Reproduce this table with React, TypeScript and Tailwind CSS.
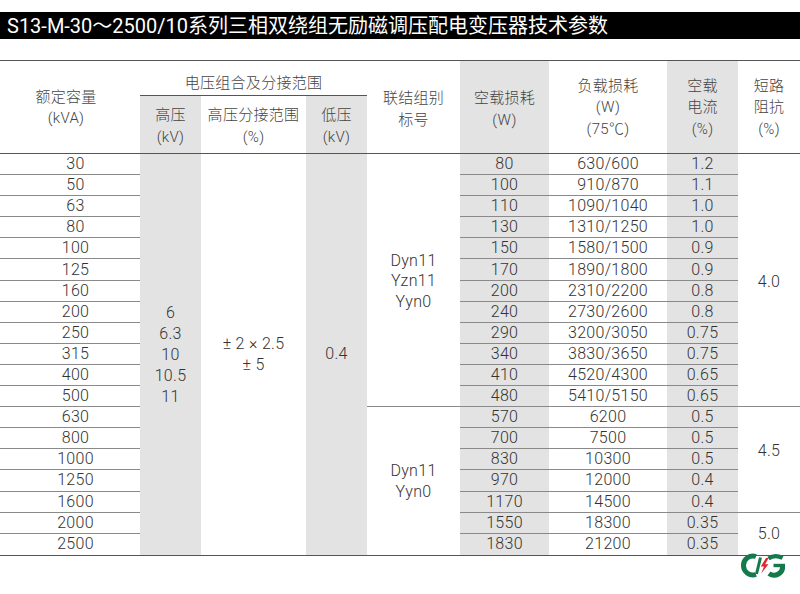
import React from 'react';

const rows: [string, string, string, string][] = [
  ['30', '80', '630/600', '1.2'],
  ['50', '100', '910/870', '1.1'],
  ['63', '110', '1090/1040', '1.0'],
  ['80', '130', '1310/1250', '1.0'],
  ['100', '150', '1580/1500', '0.9'],
  ['125', '170', '1890/1800', '0.9'],
  ['160', '200', '2310/2200', '0.8'],
  ['200', '240', '2730/2600', '0.8'],
  ['250', '290', '3200/3050', '0.75'],
  ['315', '340', '3830/3650', '0.75'],
  ['400', '410', '4520/4300', '0.65'],
  ['500', '480', '5410/5150', '0.65'],
  ['630', '570', '6200', '0.5'],
  ['800', '700', '7500', '0.5'],
  ['1000', '830', '10300', '0.5'],
  ['1250', '970', '12000', '0.4'],
  ['1600', '1170', '14500', '0.4'],
  ['2000', '1550', '18300', '0.35'],
  ['2500', '1830', '21200', '0.35'],
];

function Logo() {
  return (
    <svg width="44" height="25" viewBox="0 0 44 25" fill="none">
      <path d="M15 3.5 A9.5 9.5 0 1 0 15 21.5" stroke="#147a4c" strokeWidth="5" />
      <path d="M19.5 4.5 L15.5 21" stroke="#147a4c" strokeWidth="3" />
      <polygon points="25,5 19.8,13.4 23,13.4 20.2,20.5 27.4,11.2 24.2,11.2 27.6,5" fill="#e3262b" />
      <path d="M27.5 5.5 Q34 1 41.5 5" stroke="#147a4c" strokeWidth="4" />
      <path d="M41.5 12.5 A8.5 8.5 0 0 1 28 20.5" stroke="#147a4c" strokeWidth="5" />
      <path d="M32.5 12.5 H44" stroke="#147a4c" strokeWidth="3.4" />
    </svg>
  );
}

export default function App() {
  const gray = 'bg-[#e3e3e3]';
  const cells: React.ReactNode[] = [];

  rows.forEach((r, i) => {
    const last = i === rows.length - 1;
    const line = last ? '' : 'border-b border-[#8a8a8a]';
    cells.push(
      <div key={`c1-${i}`} className={`flex items-center justify-center pl-[11px] ${line}`}>
        {r[0]}
      </div>
    );
    if (i === 0) {
      cells.push(
        <div key="hv" className={`row-span-19 flex flex-col items-center justify-center leading-[21px] ${gray}`}>
          <span>6</span>
          <span>6.3</span>
          <span>10</span>
          <span>10.5</span>
          <span>11</span>
        </div>
      );
      cells.push(
        <div key="tap" className="row-span-19 flex flex-col items-center justify-center leading-[21px]">
          <span>± 2 × 2.5</span>
          <span>± 5</span>
        </div>
      );
      cells.push(
        <div key="lv" className={`row-span-19 flex items-center justify-center ${gray}`}>
          0.4
        </div>
      );
      cells.push(
        <div key="g1" className="row-span-12 flex flex-col items-center justify-center leading-[20.5px] border-b border-[#8a8a8a] pt-[3px]">
          <span>Dyn11</span>
          <span>Yzn11</span>
          <span>Yyn0</span>
        </div>
      );
    }
    if (i === 12) {
      cells.push(
        <div key="g2" className="row-span-7 flex flex-col items-center justify-center leading-[21px]">
          <span>Dyn11</span>
          <span>Yyn0</span>
        </div>
      );
    }
    cells.push(
      <div key={`c6-${i}`} className={`flex items-center justify-center ${gray} ${line}`}>
        {r[1]}
      </div>
    );
    cells.push(
      <div key={`c7-${i}`} className={`flex items-center justify-center ${line}`}>
        {r[2]}
      </div>
    );
    cells.push(
      <div key={`c8-${i}`} className={`flex items-center justify-center ${gray} ${line}`}>
        {r[3]}
      </div>
    );
    if (i === 0) {
      cells.push(
        <div key="z1" className="row-span-12 flex items-center justify-center border-b border-[#8a8a8a] pt-[3px]">
          4.0
        </div>
      );
    }
    if (i === 12) {
      cells.push(
        <div key="z2" className="row-span-5 flex items-center justify-center border-b border-[#8a8a8a] pb-[16px]">
          4.5
        </div>
      );
    }
    if (i === 17) {
      cells.push(
        <div key="z3" className="row-span-2 flex items-center justify-center">
          5.0
        </div>
      );
    }
  });

  const head = 'flex flex-col items-center justify-center border-b border-[#555] text-[15px] leading-[21.5px] text-[#444]';

  return (
    <div className="w-[800px] h-[594px] bg-white overflow-hidden font-[Roboto,'Noto_Sans_CJK_SC',sans-serif]">
      <div className="mt-[12px] h-[27px] bg-black flex items-center pl-[7px] text-white text-[20px] font-normal whitespace-nowrap">
        S13-M-30～2500/10系列三相双绕组无励磁调压配电变压器技术参数
      </div>

      <div className="mt-[21px] grid grid-cols-[140px_61px_105px_61px_93px_89px_118px_71px_62px] grid-rows-[35px_58px_repeat(19,21.1px)] border-y border-[#555] text-[16px] font-light tracking-[0.3px] text-[#333] leading-none">
        <div className={`row-span-2 pr-[8px] pt-[2px] ${head}`}>
          <span>额定容量</span>
          <span>(kVA)</span>
        </div>
        <div className={`col-span-3 pt-[12px] ${head}`}>
          <span>电压组合及分接范围</span>
        </div>
        <div className={`row-span-2 pt-[5px] ${head}`}>
          <span>联结组别</span>
          <span>标号</span>
        </div>
        <div className={`row-span-2 pt-[5px] ${gray} ${head}`}>
          <span>空载损耗</span>
          <span>(W)</span>
        </div>
        <div className={`row-span-2 pt-[2px] ${head}`}>
          <span>负载损耗</span>
          <span>(W)</span>
          <span>(75℃)</span>
        </div>
        <div className={`row-span-2 pt-[2px] ${gray} ${head}`}>
          <span>空载</span>
          <span>电流</span>
          <span>(%)</span>
        </div>
        <div className={`row-span-2 pt-[2px] ${head}`}>
          <span>短路</span>
          <span>阻抗</span>
          <span>(%)</span>
        </div>
        <div className={`${gray} ${head} leading-[17.5px] pt-[4px]`}>
          <span>高压</span>
          <span>(kV)</span>
        </div>
        <div className={`${head} leading-[17.5px] pt-[4px]`}>
          <span>高压分接范围</span>
          <span>(%)</span>
        </div>
        <div className={`${gray} ${head} leading-[17.5px] pt-[4px]`}>
          <span>低压</span>
          <span>(kV)</span>
        </div>
        {cells}
      </div>

      <div className="relative -mt-[3px] flex justify-end pr-[15px]">
        <Logo />
      </div>
    </div>
  );
}
